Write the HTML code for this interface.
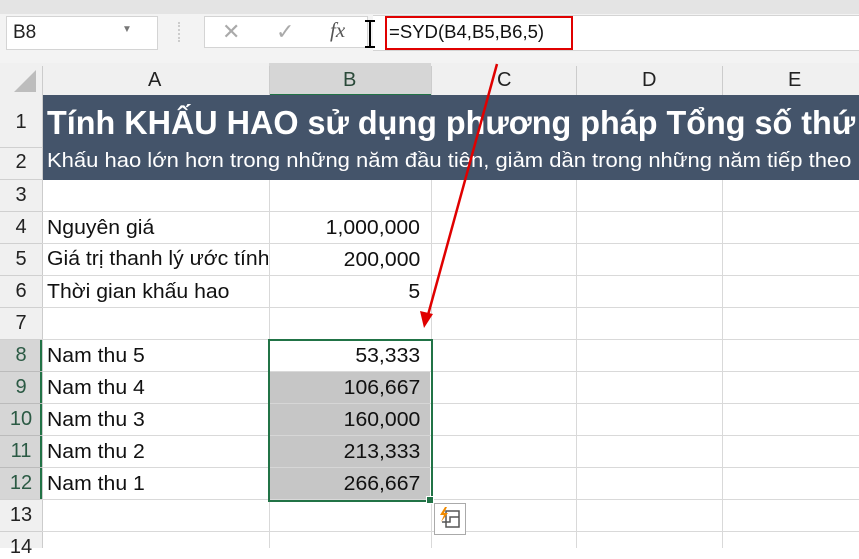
<!DOCTYPE html>
<html><head><meta charset="utf-8"><style>
body{margin:0;width:859px;height:548px;overflow:hidden;background:#fff;font-family:"Liberation Sans","DejaVu Sans",sans-serif;position:relative}
.a{position:absolute}
.t{position:absolute;white-space:nowrap;transform-origin:0 50%;}
.rh{position:absolute;left:0;width:42px;text-align:center;font-size:20px;color:#222}
.hl{position:absolute;left:42px;right:0;height:1px;background:#d9d9d9}
.vl{position:absolute;width:1px;background:#d9d9d9;top:95px;bottom:0}
.cell{position:absolute;font-size:20px;color:#111;white-space:nowrap;transform:scaleX(1.06);transform-origin:0 50%}
.num{position:absolute;font-size:20px;color:#111;text-align:right;right:439px;white-space:nowrap;transform:scaleX(1.06);transform-origin:100% 50%}
</style></head><body>
<div class="a" style="left:0;top:0;width:859px;height:63px;background:#f3f3f3"></div>
<div class="a" style="left:0;top:0;width:859px;height:14px;background:#e4e4e4"></div>
<div class="a" style="left:6px;top:16px;width:150px;height:32px;background:#fff;border:1px solid #d4d4d4"></div>
<div class="t" style="left:13px;top:22px;font-size:19px;color:#222">B8</div>
<div class="t" style="left:122px;top:24px;font-size:10px;color:#777">▼</div>
<div class="a" style="left:178px;top:22px;width:2px;height:20px;border-left:2px dotted #ccc"></div>
<div class="a" style="left:204px;top:16px;width:164px;height:32px;background:#fff;border:1px solid #d4d4d4;box-sizing:border-box"></div>
<div class="t" style="left:222px;top:19px;font-size:22px;color:#aaa">✕</div>
<div class="t" style="left:276px;top:19px;font-size:22px;color:#aaa">✓</div>
<div class="t" style="left:330px;top:18px;font-size:21px;color:#555;font-family:'Liberation Serif',serif;font-style:italic">fx</div>
<div class="a" style="left:373px;top:15px;width:486px;height:34px;background:#fff;border-top:1px solid #d4d4d4;border-bottom:1px solid #d4d4d4"></div>
<svg class="a" style="left:362px;top:20px" width="16" height="28"><path d="M3 1h10M3 27h10M8 1v26" stroke="#000" stroke-width="2" fill="none"/></svg>
<div class="a" style="left:385px;top:16px;width:184px;height:30px;border:2px solid #e00000"></div>
<div class="t" style="left:389px;top:22px;font-size:18px;color:#111;transform:scaleX(1.03)">=SYD(B4,B5,B6,5)</div>

<div class="a" style="left:0;top:63px;width:859px;height:32px;background:#f0f0f0;border-bottom:1px solid #d0d0d0"></div>
<div class="a" style="left:269px;top:63px;width:162px;height:31px;background:#d6d6d6;border-bottom:2px solid #217346"></div>
<svg class="a" style="left:14px;top:70px" width="22" height="22"><polygon points="22,0 22,22 0,22" fill="#bdbdbd"/></svg>
<div class="a" style="left:42px;top:66px;width:1px;height:29px;background:#ccc"></div>
<div class="a" style="left:269px;top:66px;width:1px;height:29px;background:#ccc"></div>
<div class="a" style="left:431px;top:66px;width:1px;height:29px;background:#ccc"></div>
<div class="a" style="left:576px;top:66px;width:1px;height:29px;background:#ccc"></div>
<div class="a" style="left:722px;top:66px;width:1px;height:29px;background:#ccc"></div>
<div class="t" style="left:148px;top:69px;font-size:20px;color:#222">A</div>
<div class="t" style="left:343px;top:69px;font-size:20px;color:#2b4a3a">B</div>
<div class="t" style="left:497px;top:69px;font-size:20px;color:#222">C</div>
<div class="t" style="left:642px;top:69px;font-size:20px;color:#222">D</div>
<div class="t" style="left:788px;top:69px;font-size:20px;color:#222">E</div>

<div class="a" style="left:0;top:95px;width:42px;height:453px;background:#f0f0f0;border-right:1px solid #ccc"></div>
<div class="a" style="left:0;top:340px;width:42px;height:160px;background:#d6d6d6;border-right:2px solid #217346;box-sizing:border-box"></div>
<div class="rh" style="top:111px">1</div>
<div class="rh" style="top:151px">2</div>
<div class="rh" style="top:184px">3</div>
<div class="rh" style="top:216px">4</div>
<div class="rh" style="top:248px">5</div>
<div class="rh" style="top:280px">6</div>
<div class="rh" style="top:312px">7</div>
<div class="rh" style="top:344px;color:#2b5a44">8</div>
<div class="rh" style="top:376px;color:#2b5a44">9</div>
<div class="rh" style="top:408px;color:#2b5a44">10</div>
<div class="rh" style="top:440px;color:#2b5a44">11</div>
<div class="rh" style="top:472px;color:#2b5a44">12</div>
<div class="rh" style="top:504px">13</div>
<div class="rh" style="top:536px">14</div>
<div class="a" style="left:0;top:147px;width:42px;height:1px;background:#d0d0d0"></div>
<div class="a" style="left:0;top:179px;width:42px;height:1px;background:#d0d0d0"></div>
<div class="a" style="left:0;top:211px;width:42px;height:1px;background:#d0d0d0"></div>
<div class="a" style="left:0;top:243px;width:42px;height:1px;background:#d0d0d0"></div>
<div class="a" style="left:0;top:275px;width:42px;height:1px;background:#d0d0d0"></div>
<div class="a" style="left:0;top:307px;width:42px;height:1px;background:#d0d0d0"></div>
<div class="a" style="left:0;top:339px;width:42px;height:1px;background:#d0d0d0"></div>
<div class="a" style="left:0;top:371px;width:42px;height:1px;background:#bbb"></div>
<div class="a" style="left:0;top:403px;width:42px;height:1px;background:#bbb"></div>
<div class="a" style="left:0;top:435px;width:42px;height:1px;background:#bbb"></div>
<div class="a" style="left:0;top:467px;width:42px;height:1px;background:#bbb"></div>
<div class="a" style="left:0;top:499px;width:42px;height:1px;background:#d0d0d0"></div>
<div class="a" style="left:0;top:531px;width:42px;height:1px;background:#d0d0d0"></div>

<div class="vl" style="left:269px"></div>
<div class="vl" style="left:431px"></div>
<div class="vl" style="left:576px"></div>
<div class="vl" style="left:722px"></div>
<div class="hl" style="top:211px"></div>
<div class="hl" style="top:243px"></div>
<div class="hl" style="top:275px"></div>
<div class="hl" style="top:307px"></div>
<div class="hl" style="top:339px"></div>
<div class="hl" style="top:371px"></div>
<div class="hl" style="top:403px"></div>
<div class="hl" style="top:435px"></div>
<div class="hl" style="top:467px"></div>
<div class="hl" style="top:499px"></div>
<div class="hl" style="top:531px"></div>

<div class="a" style="left:43px;top:95px;width:816px;height:85px;background:#44546a;overflow:hidden">
<div class="t" style="left:4px;top:9px;font-size:33px;font-weight:bold;color:#fff;transform:scaleX(0.98)">Tính KHẤU HAO sử dụng phương pháp Tổng số thứ tự năm</div>
<div class="t" style="left:4px;top:55px;font-size:20px;color:#fff;transform:scaleX(1.1)">Khấu hao lớn hơn trong những năm đầu tiên, giảm dần trong những năm tiếp theo</div>
</div>

<div class="cell" style="left:47px;top:217px">Nguyên giá</div>
<div class="a" style="left:43px;top:244px;width:225px;height:31px;overflow:hidden"><div class="cell" style="left:4px;top:4px">Giá trị thanh lý ước tính</div></div>
<div class="cell" style="left:47px;top:281px">Thời gian khấu hao</div>
<div class="num" style="top:217px">1,000,000</div>
<div class="num" style="top:249px">200,000</div>
<div class="num" style="top:281px">5</div>

<div class="a" style="left:270px;top:372px;width:160px;height:127px;background:#c6c6c6"></div>
<div class="a" style="left:270px;top:403px;width:160px;height:1px;background:#d6d6d6"></div>
<div class="a" style="left:270px;top:435px;width:160px;height:1px;background:#d6d6d6"></div>
<div class="a" style="left:270px;top:467px;width:160px;height:1px;background:#d6d6d6"></div>
<div class="a" style="left:268px;top:339px;width:161px;height:159px;border:2px solid #217346"></div>
<div class="a" style="left:426px;top:496px;width:6px;height:6px;background:#217346;border:1px solid #fff"></div>

<div class="cell" style="left:47px;top:345px">Nam thu 5</div>
<div class="cell" style="left:47px;top:377px">Nam thu 4</div>
<div class="cell" style="left:47px;top:409px">Nam thu 3</div>
<div class="cell" style="left:47px;top:441px">Nam thu 2</div>
<div class="cell" style="left:47px;top:473px">Nam thu 1</div>
<div class="num" style="top:345px">53,333</div>
<div class="num" style="top:377px">106,667</div>
<div class="num" style="top:409px">160,000</div>
<div class="num" style="top:441px">213,333</div>
<div class="num" style="top:473px">266,667</div>

<div class="a" style="left:434px;top:503px;width:32px;height:32px;background:#fff;border:1px solid #aaa;box-sizing:border-box"></div>
<svg class="a" style="left:434px;top:503px" width="32" height="32">
<rect x="12" y="8" width="13" height="16" fill="none" stroke="#555" stroke-width="1.5"/>
<path d="M8 19h8v-5h9" fill="none" stroke="#555" stroke-width="1.5"/>
<path d="M11 4l-5 8h4l-3 7 7-9h-4l3-6z" fill="#f08a00"/>
</svg>

<svg class="a" style="left:0;top:0" width="859" height="548">
<line x1="497" y1="64" x2="428" y2="315" stroke="#e00000" stroke-width="2.5"/>
<polygon points="424,328 420,311 433,314" fill="#e00000"/>
</svg>
</body></html>
